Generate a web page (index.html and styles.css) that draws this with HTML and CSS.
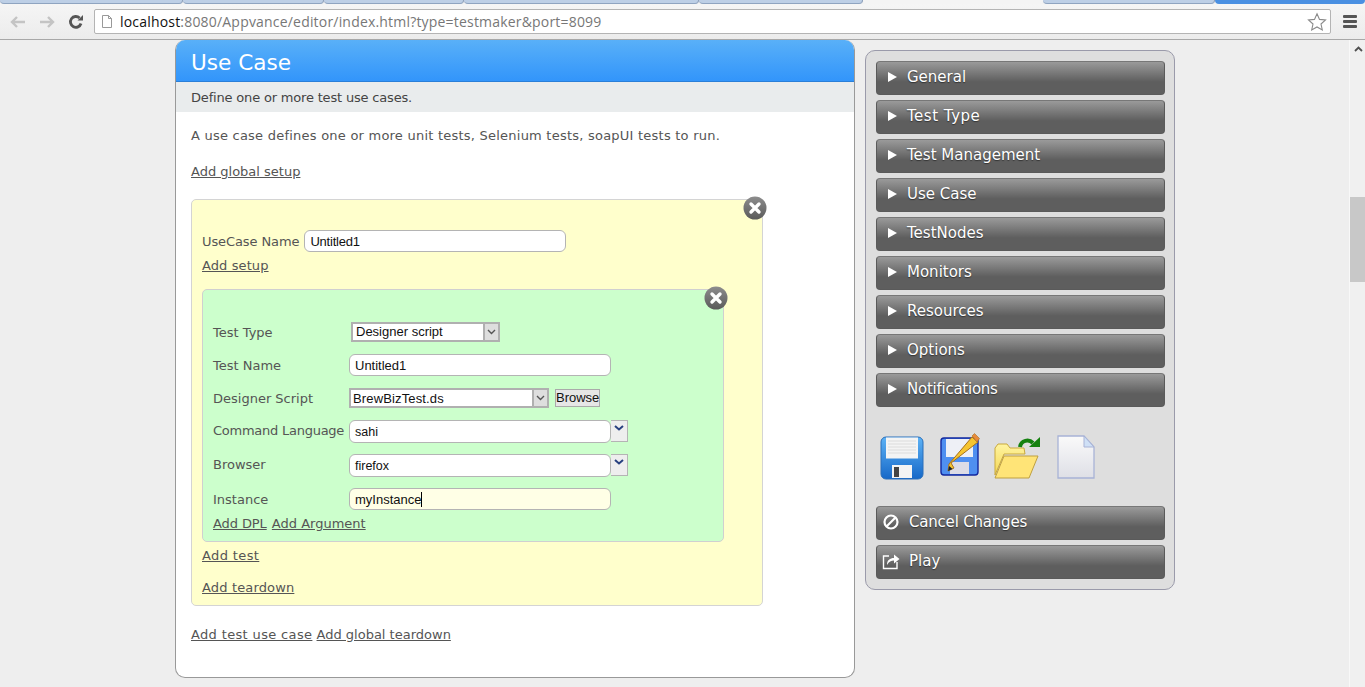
FILE: index.html
```html
<!DOCTYPE html>
<html lang="en">
<head>
<meta charset="utf-8">
<title>Use Case</title>
<link rel="stylesheet" href="styles.css">
</head>
<body>
<div class="chrome">
  <div class="tabstrip">
    <i class="tab t1"></i><i class="tab t2"></i><i class="tab t3"></i><i class="tab t4"></i><i class="tab t5"></i><i class="tab active"></i><i class="tab t7"></i><i class="tab t8"></i>
  </div>
  <div class="toolbar">
    <svg class="nav" width="18" height="14" viewBox="0 0 18 14"><path d="M16 7H3M8 2L3 7l5 5" fill="none" stroke="#c4c4c4" stroke-width="2.4"/></svg>
    <svg class="nav" width="18" height="14" viewBox="0 0 18 14"><path d="M2 7h13M10 2l5 5-5 5" fill="none" stroke="#c4c4c4" stroke-width="2.4"/></svg>
    <svg class="nav reload" width="16" height="16" viewBox="0 0 16 16"><path d="M13 9.500A5.400 5.400 0 1 1 11.600 4" fill="none" stroke="#555" stroke-width="2.800"/><path d="M9.500 6.500H15V1z" fill="#555"/></svg>
    <div class="omnibox">
      <svg class="page" width="12" height="15" viewBox="0 0 12 15"><path d="M1.500 1.500h6l3 3v9h-9zM7.500 1.500v3h3" fill="#fff" stroke="#999"/></svg>
      <span class="url"><b>localhost</b>:8080/Appvance/editor/index.html?type=testmaker&amp;port=8099</span>
      <svg class="star" width="20" height="20" viewBox="0 0 20 20"><path d="M10 1.800l2.500 5.600 6 .6-4.500 4 1.300 6L10 15l-5.300 3 1.300-6-4.500-4 6-.6z" fill="#fff" stroke="#8a8a8a" stroke-width="1.100"/></svg>
    </div>
    <div class="menu"><i></i><i></i><i></i></div>
  </div>
</div>
<div class="viewport">
  <div class="content">
    <main class="panel">
      <h1 class="title">Use Case</h1>
      <p class="subtitle">Define one or more test use cases.</p>
      <div class="body">
        <p class="intro">A use case defines one or more unit tests, Selenium tests, soapUI tests to run.</p>
        <p class="global"><a href="#">Add global setup</a></p>
        <section class="usecase">
          <span class="close"><svg width="24" height="24" viewBox="0 0 24 24"><use href="#x"/></svg></span>
          <div class="name-row"><label>UseCase Name</label><span class="input name-input">Untitled1</span></div>
          <p class="link-row add-setup"><a href="#">Add setup</a></p>
          <section class="test">
            <span class="close"><svg width="24" height="24" viewBox="0 0 24 24"><use href="#x"/></svg></span>
            <div class="row r-type"><label>Test Type</label><span class="select type-select"><span>Designer script</span><i class="sel-btn"><svg width="9" height="6" viewBox="0 0 9 6"><path d="M1 1l3.500 3.500L8 1" fill="none" stroke="#555" stroke-width="1.400"/></svg></i></span></div>
            <div class="row r-name"><label>Test Name</label><span class="input wide plain">Untitled1</span></div>
            <div class="row r-script"><label>Designer Script</label><span class="select script-select"><span>BrewBizTest.ds</span><i class="sel-btn"><svg width="9" height="6" viewBox="0 0 9 6"><path d="M1 1l3.500 3.500L8 1" fill="none" stroke="#555" stroke-width="1.400"/></svg></i></span><span class="browse">Browse</span></div>
            <div class="row r-lang"><label class="tight">Command Language</label><span class="input wide small">sahi</span><i class="combo"><svg width="10" height="6" viewBox="0 0 10 6"><path d="M1 1l4 3.500L9 1" fill="none" stroke="#27407f" stroke-width="2"/></svg></i></div>
            <div class="row r-browser"><label>Browser</label><span class="input wide small">firefox</span><i class="combo"><svg width="10" height="6" viewBox="0 0 10 6"><path d="M1 1l4 3.500L9 1" fill="none" stroke="#27407f" stroke-width="2"/></svg></i></div>
            <div class="row r-inst"><label>Instance</label><span class="input wide focus">myInstance<i class="caret"></i></span></div>
            <p class="test-links"><a class="dpl" href="#">Add DPL</a> <a class="arg" href="#">Add Argument</a></p>
          </section>
          <p class="link-row add-test"><a href="#">Add test</a></p>
          <p class="link-row add-tear"><a href="#">Add teardown</a></p>
        </section>
        <p class="global bottom"><a class="add-case" href="#">Add test use case</a> <a href="#">Add global teardown</a></p>
      </div>
    </main>
    <aside class="side">
      <a class="btn" href="#"><i class="tri"></i>General</a>
      <a class="btn wider" href="#"><i class="tri"></i>Test Type</a>
      <a class="btn" href="#"><i class="tri"></i>Test Management</a>
      <a class="btn" href="#"><i class="tri"></i>Use Case</a>
      <a class="btn" href="#"><i class="tri"></i>TestNodes</a>
      <a class="btn" href="#"><i class="tri"></i>Monitors</a>
      <a class="btn" href="#"><i class="tri"></i>Resources</a>
      <a class="btn" href="#"><i class="tri"></i>Options</a>
      <a class="btn narrower" href="#"><i class="tri"></i>Notifications</a>
      <div class="icons">
        <svg class="i-save" width="46" height="46" viewBox="0 0 46 46"><defs><linearGradient id="blue" x1="0" y1="0" x2="0" y2="1"><stop offset="0" stop-color="#5db2f5"/><stop offset="1" stop-color="#1668c8"/></linearGradient><linearGradient id="paper" x1="0" y1="0" x2="0" y2="1"><stop offset="0" stop-color="#fafafa"/><stop offset="1" stop-color="#dedfe6"/></linearGradient><linearGradient id="yel" x1="0" y1="0" x2="0" y2="1"><stop offset="0" stop-color="#fff4a0"/><stop offset="1" stop-color="#f4d755"/></linearGradient></defs>
          <rect x="2" y="2" width="42" height="42" rx="5" fill="url(#blue)" stroke="#2a6fba"/><rect x="7" y="2.500" width="32" height="21" fill="#f4f4f4"/><path d="M9 6h28M9 9h28M9 12h28M9 15h28M9 18h28" stroke="#dcdcdc"/><rect x="13" y="30" width="20" height="13" fill="#f4f4f4"/><rect x="15" y="32" width="5" height="10" fill="#444"/></svg>
        <svg class="i-edit" width="46" height="46" viewBox="0 0 46 46"><rect x="3" y="7" width="37" height="37" rx="3" fill="#4f8ff0" stroke="#13299f" stroke-width="1.400"/><rect x="8" y="8" width="27" height="18" fill="#eef0f6"/><rect x="12" y="31" width="19" height="12" fill="#dcdce6"/><path d="M13 32l3 5-6 3 1-7L34 6l6 5z" fill="#f6c531" stroke="#a6701c"/><path d="M34 5l2.500-2.500 5 5L39 11z" fill="#e88a3c" stroke="#a6701c" stroke-width=".6"/><path d="M10 40l1.200-5 3.300 3z" fill="#123"/></svg>
        <svg class="i-open" width="50" height="46" viewBox="0 0 50 46"><path d="M3 41V14l3-4h9l3 4h14l1 6H12z" fill="url(#yel)" stroke="#c9a93d"/><path d="M3 44l9-22h34l-9 22z" fill="#ffe477" stroke="#bfa040"/><path d="M28 13c1-7 9-8 13-4" fill="none" stroke="#15810f" stroke-width="4"/><path d="M37 13h11V3z" fill="#15810f"/></svg>
        <svg class="i-new" width="42" height="46" viewBox="0 0 42 46"><path d="M4 2h26l10 11v31H4z" fill="url(#paper)" stroke="#a8b3d6" stroke-width="1.300"/><path d="M30 2v11h10z" fill="#cfe0f6" stroke="#a8b3d6"/></svg>
      </div>
      <a class="btn act narrow-act" href="#"><svg class="ico" width="18" height="18" viewBox="0 0 18 18"><circle cx="9" cy="9" r="6.500" fill="none" stroke="#fff" stroke-width="2.200"/><path d="M4.500 13.500l9-9" stroke="#fff" stroke-width="2.200"/></svg>Cancel Changes</a>
      <a class="btn act" href="#"><svg class="ico" width="18" height="18" viewBox="0 0 18 18"><path d="M7 4H1.500v12.500H15V10" fill="none" stroke="#fff" stroke-width="1.400"/><path d="M5 13c0-5 3-7 7-7V2.500L17.500 7 12 11.500V8.500c-3 0-5 1-7 4.500z" fill="#fff"/></svg>Play</a>
    </aside>
  </div>
  <div class="scrollbar"><svg class="up" width="9" height="6" viewBox="0 0 9 6"><path d="M1 5l3.500-3.500L8 5" fill="none" stroke="#505050" stroke-width="1.800"/></svg><i class="thumb"></i></div>
</div>
<svg class="defs" width="0" height="0"><defs><linearGradient id="xg" x1="0" y1="0" x2="0" y2="1"><stop offset="0" stop-color="#8d8d8d"/><stop offset="1" stop-color="#5a5a5a"/></linearGradient><g id="x"><circle cx="12" cy="12" r="11.500" fill="url(#xg)"/><path d="M8 8l8 8M16 8l-8 8" stroke="#fff" stroke-width="3.400" stroke-linecap="round"/></g></defs></svg>
</body>
</html>
```
FILE: styles.css
```css
* { box-sizing: border-box; }
html, body { margin: 0; height: 100%; overflow: hidden; }
body { background: #eee; font-family: "DejaVu Sans", Verdana, sans-serif; font-size: 13px; color: #555; width: 1365px; height: 687px; }
a { color: #555; text-decoration: underline; }
p { margin: 0; }
i { display: block; font-style: normal; }

.chrome { height: 40px; background: linear-gradient(#f6f6f6, #ececec); border-bottom: 1px solid #a8a8a8; }
.tabstrip { height: 4px; display: flex; background: #f2f2f2; }
.tab { height: 4px; background: #bdcfe6; border-right: 1px solid #8a9db8; border-bottom: 1px solid #8fa4c0; border-radius: 0 0 4px 4px; }
.t1 { width: 183px; } .t2 { width: 141px; } .t3 { width: 140px; } .t4 { width: 235px; } .t5 { width: 164px; }
.tab.active { width: 180px; background: #f4f4f4; border: 0; }
.t7 { width: 172px; }
.t8 { flex: 1; background: #4a90e2; border: 0; }
.toolbar { display: flex; align-items: center; height: 35px; padding: 0 8px 0 9px; }
.nav { flex: none; margin-right: 11px; }
.reload { margin: 0 11px 0 1px; }
.omnibox { flex: none; width: 1237px; height: 25px; margin-left: -1px; background: #fff; border: 1px solid #b4b4b4; border-radius: 2px; display: flex; align-items: center; padding: 0 3px 0 6px; }
.page { flex: none; margin-right: 7px; }
.url { flex: 1; font-family: "Open Sans", "DejaVu Sans", sans-serif; font-size: 14px; letter-spacing: .19px; color: #777; white-space: nowrap; }
.url b { font-weight: 400; color: #111; }
.star { flex: none; }
.menu { flex: none; margin-left: 12px; width: 14px; display: flex; flex-direction: column; gap: 2px; }
.menu i { height: 3px; background: #555; border-radius: 1px; }

.viewport { position: relative; height: 647px; overflow: hidden; }
.content { display: flex; align-items: flex-start; padding-left: 175px; gap: 10px; }
.panel { width: 680px; height: 638px; flex: none; background: #fff; border: 1px solid #999; border-top: 0; border-radius: 10px; overflow: hidden; }
.title { margin: 0; height: 42px; background: linear-gradient(#59b0f8, #3295fb); border-bottom: 1px solid #2a7fd8; color: #fff; font-size: 21.6px; font-weight: 400; line-height: 45px; padding-left: 15px; }
.subtitle { height: 30px; background: #e9eced; line-height: 31px; padding-left: 15px; color: #444; font-size: 13px; letter-spacing: -.18px; }
.body { padding: 0 15px; }
.intro { padding-top: 15px; line-height: 17px; letter-spacing: .23px; }
.global { margin-top: 19px; line-height: 17px; }
.usecase { position: relative; width: 572px; height: 407px; margin-top: 19px; background: #ffc; border: 1px solid #d4d4d4; border-radius: 5px; padding: 30px 10px 0; }
.close { position: absolute; top: -4px; right: -5px; width: 24px; height: 24px; }
.name-row { display: flex; align-items: center; height: 22px; }
.name-row label { margin-right: 5px; letter-spacing: -.1px; }
.input { display: block; height: 22px; background: #fff; border: 1px solid #b4b4b4; border-radius: 6px; font-family: "Liberation Sans", Arial, sans-serif; font-size: 13px; line-height: 22px; padding-left: 5px; color: #111; white-space: nowrap; }
.name-input { width: 262px; letter-spacing: -.2px; }
.link-row { line-height: 17px; margin-top: 4px; }
.add-setup { margin-top: 5px; letter-spacing: .1px; }
.test { position: relative; width: 522px; height: 253px; margin-top: 15px; background: #cfc; border: 1px solid #d0d0d0; border-radius: 5px; padding: 31px 10px 0; }
.row { display: flex; align-items: center; }
.row label { width: 136px; flex: none; }
.row label.tight { letter-spacing: -.25px; }
.r-type { height: 21px; }
.r-type label { width: 138px; margin-top: 2px; }
.r-name { height: 22px; margin-top: 12px; }
.r-script { height: 20px; margin-top: 12px; }
.r-lang { height: 24px; margin-top: 10px; }
.r-browser { height: 24px; margin-top: 10px; }
.r-inst { height: 22px; margin-top: 12px; }
.select { display: flex; align-items: center; height: 20px; background: #fff; border: 2px solid #b0b0b0; font-family: "Liberation Sans", Arial, sans-serif; font-size: 13px; color: #111; }
.select span { flex: 1; padding-left: 3px; }
.type-select { width: 149px; }
.script-select { width: 200px; letter-spacing: .14px; }
.script-select span { padding-left: 2px; }
.sel-btn { width: 15px; height: 16px; flex: none; display: flex; align-items: center; justify-content: center; background: #dedede; border-left: 2px solid #b0b0b0; }
.browse { margin-left: 6px; height: 18px; width: 45px; background: #e6e6e6; border: 1px solid #aaa; font-family: "Liberation Sans", Arial, sans-serif; font-size: 13px; line-height: 16px; text-align: center; color: #111; }
.wide { width: 262px; flex: none; }
.small { height: 23px; align-self: flex-start; margin-top: 2px; line-height: 22px; font-size: 12.5px; border-radius: 6px; }
.focus { background: #ffffe6; }
.caret { display: inline-block; width: 1px; height: 15px; background: #000; vertical-align: -3px; }
.combo { flex: none; width: 17px; height: 22px; align-self: flex-start; margin-top: 2px; display: flex; align-items: center; justify-content: center; padding-bottom: 7px; background: #eee; border: 1px solid #b4b4b4; border-left: 0; }
.test-links { line-height: 17px; margin-top: 5px; }
.dpl { letter-spacing: -.1px; }
.arg { margin-left: 1px; }
.add-test { margin-top: 5px; letter-spacing: .38px; }
.add-tear { margin-top: 15px; letter-spacing: .15px; }
.bottom { margin-top: 20px; }
.add-case { letter-spacing: .35px; }

.side { width: 310px; height: 540px; flex: none; margin-top: 10px; background: #dedede; border: 1px solid #9a9aaa; border-radius: 10px; padding: 10px 9px 0 10px; }
.btn { display: flex; align-items: center; height: 34px; margin-bottom: 5px; padding: 0 0 2px 11px; background: linear-gradient(#9a9a9a 0, #5e5e5e 62%, #5e5e5e 100%); border: 1px solid #5a5a5a; border-top-color: #777; border-radius: 4px; color: #fff; font-size: 15px; text-decoration: none; text-shadow: 0 1px 1px #333; }
.wider { letter-spacing: .5px; }
.narrower { letter-spacing: -.25px; }
.narrow-act { letter-spacing: -.2px; }
.tri { width: 0; height: 0; margin-right: 10px; border-left: 9px solid #fff; border-top: 5px solid transparent; border-bottom: 5px solid transparent; }
.icons { display: flex; align-items: flex-start; height: 60px; margin: 23px 0 16px; padding-left: 3px; }
.icons svg { flex: none; }
.i-save { margin-top: 5px; }
.i-edit { margin: 1px 0 0 13px; }
.i-open { margin: 4px 0 0 8px; }
.i-new { margin: 4px 0 0 12px; }
.act { padding-left: 4px; }
.ico { margin-right: 9px; flex: none; margin-left: 1px; }

.scrollbar { position: absolute; top: 0; right: 0; width: 16px; height: 100%; background: #f0f0f0; border-left: 1px solid #f8f8f8; }
.up { position: absolute; top: 6px; left: 4px; }
.thumb { position: absolute; top: 157px; left: 0; width: 15px; height: 85px; background: #c8c8c8; }
.defs { position: absolute; }
```
